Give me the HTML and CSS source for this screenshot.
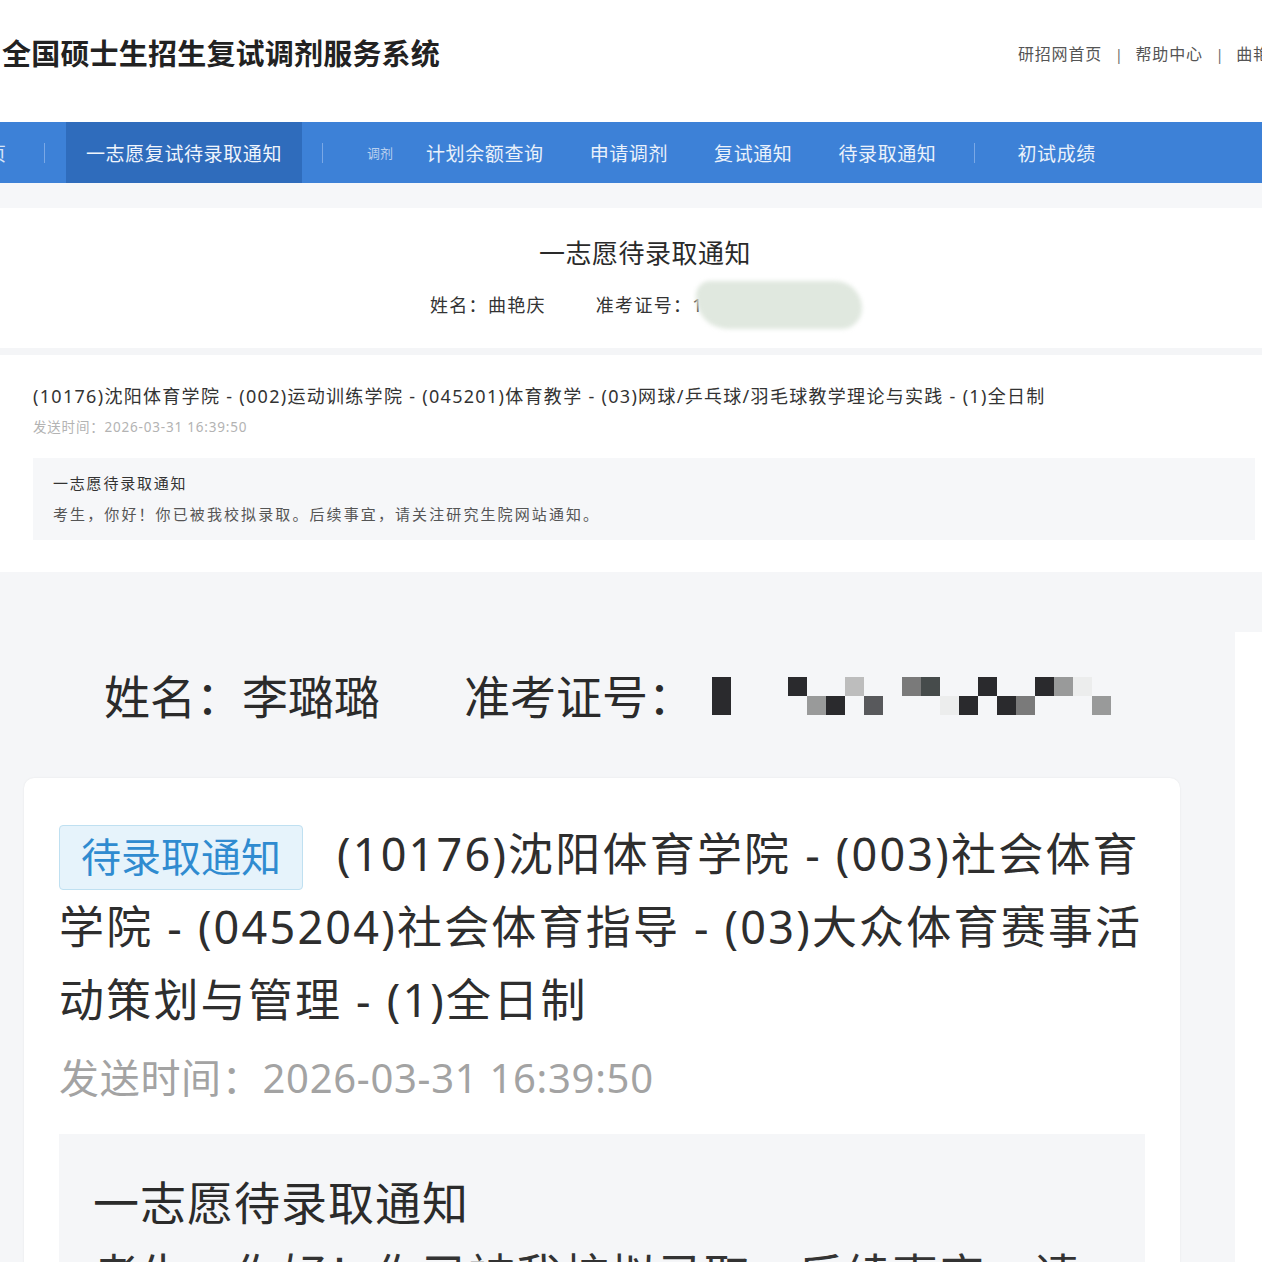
FILE: index.html
```html
<!DOCTYPE html>
<html lang="zh-CN">
<head>
<meta charset="utf-8">
<title>全国硕士生招生复试调剂服务系统</title>
<link rel="stylesheet" href="styles.css">
</head>
<body>
<div class="desk">
  <header class="header">
    <h1 class="site-title">全国硕士生招生复试调剂服务系统</h1>
    <div class="top-links">
      <span>研招网首页</span><span class="bar">|</span><span>帮助中心</span><span class="bar">|</span><span>曲艳庆</span>
    </div>
  </header>
  <nav class="nav">
    <span class="nav-cut">页</span>
    <i class="nav-sep sep-a"></i>
    <span class="nav-active">一志愿复试待录取通知</span>
    <i class="nav-sep sep-b"></i>
    <span class="nav-sub">调剂</span>
    <span class="nav-link first">计划余额查询</span>
    <span class="nav-link">申请调剂</span>
    <span class="nav-link">复试通知</span>
    <span class="nav-link">待录取通知</span>
    <i class="nav-sep sep-c"></i>
    <span class="nav-link last">初试成绩</span>
  </nav>
  <section class="panel-head">
    <h2 class="panel-title">一志愿待录取通知</h2>
    <div class="panel-meta">
      <span class="meta-name">姓名：曲艳庆</span>
      <span class="meta-id">准考证号：1<span class="smudge"></span></span>
    </div>
  </section>
  <section class="panel-body">
    <div class="course">(10176)沈阳体育学院 - (002)运动训练学院 - (045201)体育教学 - (03)网球/乒乓球/羽毛球教学理论与实践 - (1)全日制</div>
    <div class="sent">发送时间：2026-03-31 16:39:50</div>
    <div class="msg">
      <div class="msg-title">一志愿待录取通知</div>
      <div class="msg-text">考生，你好！你已被我校拟录取。后续事宜，请关注研究生院网站通知。</div>
    </div>
  </section>
</div>

<div class="mobile">
  <div class="m-main">
    <div class="m-namebar">
      <span class="m-name">姓名：李璐璐</span>
      <span class="m-idlabel">准考证号：</span>
      <span class="pix">
        <span class="px-tall"></span>
        <span class="px-grid">
          <span class="col"><i class="k"></i><i></i></span>
          <span class="col"><i></i><i class="g2"></i></span>
          <span class="col"><i></i><i class="k"></i></span>
          <span class="col"><i class="g1"></i><i></i></span>
          <span class="col"><i></i><i class="g4"></i></span>
          <span class="col"><i></i><i></i></span>
          <span class="col"><i class="g3"></i><i></i></span>
          <span class="col"><i class="g5"></i><i></i></span>
          <span class="col"><i></i><i class="g0"></i></span>
          <span class="col"><i></i><i class="k"></i></span>
          <span class="col"><i class="k"></i><i></i></span>
          <span class="col"><i></i><i class="k"></i></span>
          <span class="col"><i></i><i class="g3"></i></span>
          <span class="col"><i class="k"></i><i></i></span>
          <span class="col"><i class="g2"></i><i></i></span>
          <span class="col"><i class="g0"></i><i></i></span>
          <span class="col"><i></i><i class="g2"></i></span>
        </span>
      </span>
    </div>
    <article class="m-card">
      <div class="m-course"><span class="m-tag">待录取通知</span>(10176)沈阳体育学院 - (003)社会体育<br>学院 - (045204)社会体育指导 - (03)大众体育赛事活<br>动策划与管理 - (1)全日制</div>
      <div class="m-sent">发送时间：2026-03-31 16:39:50</div>
      <div class="m-msg">
        <div class="m-msg-title">一志愿待录取通知</div>
        <div class="m-msg-text">考生，你好！你已被我校拟录取。后续事宜，请关注研究生院网站通知。</div>
      </div>
    </article>
  </div>
  <div class="m-side"></div>
</div>
</body>
</html>
```

FILE: styles.css
```css
* { box-sizing: border-box; }
html, body {
  margin: 0;
  padding: 0;
}
body {
  width: 1262px;
  overflow: hidden;
  background: #f5f6f8;
  font-family: "Noto Sans", "Noto Sans CJK SC", sans-serif;
  color: #333;
}

/* ---------- desktop screenshot part ---------- */
.desk { background: #fff; }

.header {
  height: 122px;
  padding-bottom: 14px;
  display: flex;
  align-items: center;
  justify-content: space-between;
  overflow: hidden;
  background: #fff;
}
.site-title {
  margin: 0 0 0 2px;
  font-size: 29px;
  line-height: 40px;
  font-weight: 700;
  color: #222;
  letter-spacing: 0.2px;
}
.top-links {
  width: 244px;
  flex-shrink: 0;
  white-space: nowrap;
  overflow: hidden;
  font-size: 16px;
  line-height: 22px;
  color: #555;
  letter-spacing: 0.8px;
}
.top-links .bar {
  display: inline-block;
  margin: 0 12px 0 13px;
  color: #666;
  font-size: 14px;
}

.nav {
  height: 61px;
  background: #3d81d7;
  display: flex;
  align-items: stretch;
  overflow: hidden;
  color: #eaf1fb;
  font-size: 19px;
  letter-spacing: 0.6px;
  white-space: nowrap;
}
.nav > span { display: flex; align-items: center; }
.nav-cut { margin-left: -13px; width: 19px; color: #d6e4f7; }
.nav-sep {
  align-self: center;
  width: 1px;
  height: 20px;
  background: #7aa8e6;
}
.sep-a { margin-left: 38px; }
.sep-b { margin-left: 20px; }
.sep-c { margin-left: 38px; }
.nav-active {
  margin-left: 21px;
  width: 236px;
  padding: 0 20px;
  background: #2f6cbc;
  color: #f0f5fc;
}
.nav-sub {
  margin-left: 44px;
  font-size: 13px;
  letter-spacing: 0;
  color: #b9d0ef;
}
.nav-link { margin-left: 46px; }
.nav-link.first { margin-left: 33px; }
.nav-link.last { margin-left: 42px; }

.panel-head {
  border-top: 25px solid #f6f7f9;
  border-bottom: 7px solid #f4f5f7;
  padding: 27px 0 31px 0;
  background: #fff;
}
.panel-title {
  margin: 0;
  padding-left: 28px;
  text-align: center;
  font-size: 26px;
  line-height: 36px;
  font-weight: 400;
  color: #2a2a2a;
  letter-spacing: 0.5px;
}
.panel-meta {
  margin-top: 22px;
  display: flex;
  gap: 50px;
  padding-left: 430px;
  font-size: 18px;
  line-height: 24px;
  color: #333;
  letter-spacing: 1.3px;
}
.meta-id { position: relative; }
.smudge {
  position: absolute;
  left: 100px;
  top: -12px;
  width: 166px;
  height: 48px;
  border-radius: 18px 34px 26px 40px;
  background: #e0e8df;
  filter: blur(2px);
}

.panel-body {
  padding: 28px 7px 32px 33px;
  background: #fff;
}
.course {
  font-size: 18px;
  line-height: 26px;
  color: #333;
  white-space: nowrap;
  letter-spacing: 1.3px;
}
.sent {
  margin-top: 8px;
  font-size: 13.5px;
  line-height: 20px;
  color: #b3b3b3;
  letter-spacing: 0.8px;
}
.msg {
  margin-top: 21px;
  background: #f6f7f9;
  padding: 14px 20px 15px;
}
.msg-title {
  font-size: 15px;
  line-height: 22px;
  color: #333;
  letter-spacing: 1.8px;
}
.msg-text {
  margin-top: 9px;
  font-size: 15px;
  line-height: 22px;
  color: #555;
  letter-spacing: 2.1px;
}

/* ---------- mobile screenshot part ---------- */
.mobile {
  display: flex;
  background: #f5f6f8;
}
.m-main {
  width: 1235px;
  flex-shrink: 0;
  padding-top: 92px;
}
.m-side {
  flex: 1;
  margin-top: 60px;
  background: #fff;
}
.m-namebar {
  display: flex;
  align-items: center;
  padding-left: 104px;
  height: 60px;
  font-size: 46px;
  color: #2b2b2b;
  white-space: nowrap;
}
.m-idlabel { margin-left: 84px; }
.pix {
  display: flex;
  align-items: flex-start;
  margin-left: 18px;
  margin-top: 4px;
}
.px-tall {
  width: 19px;
  height: 38px;
  background: #2a2a2d;
}
.px-grid {
  display: flex;
  margin-left: 57px;
}
.px-grid .col {
  display: flex;
  flex-direction: column;
  width: 19px;
}
.px-grid i {
  display: block;
  width: 19px;
  height: 19px;
}
.px-grid .k { background: #2a2a2d; }
.px-grid .g0 { background: #eceded; }
.px-grid .g1 { background: #bdbdbd; }
.px-grid .g2 { background: #999a9a; }
.px-grid .g3 { background: #7a7a7a; }
.px-grid .g4 { background: #58595c; }
.px-grid .g5 { background: #464b4b; }

.m-card {
  margin: 54px 0 0 24px;
  width: 1156px;
  background: #fff;
  border-radius: 10px 10px 0 0;
  box-shadow: 0 0 2px rgba(0, 0, 0, 0.08);
  padding: 39px 35px 40px 35px;
}
.m-course {
  font-size: 45px;
  line-height: 73px;
  color: #2e2e2e;
  white-space: nowrap;
  letter-spacing: 2.2px;
}
.m-tag {
  display: inline-block;
  vertical-align: top;
  margin: 8px 34px 0 0;
  height: 65px;
  padding: 0 21px;
  line-height: 61px;
  font-size: 40px;
  letter-spacing: 0;
  color: #2f8bd0;
  background: #e6f3fb;
  border: 1px solid #bfe0f1;
  border-radius: 4px;
}
.m-sent {
  margin-top: 14px;
  font-size: 40px;
  line-height: 56px;
  color: #a3a3a3;
  letter-spacing: 0.7px;
}
.m-msg {
  margin-top: 28px;
  background: #f5f6f8;
  padding: 38px 34px 40px;
}
.m-msg-title {
  font-size: 46px;
  line-height: 60px;
  color: #2b2b2b;
  letter-spacing: 1px;
}
.m-msg-text {
  margin-top: 12px;
  font-size: 46px;
  line-height: 60px;
  color: #333;
  letter-spacing: 1px;
}
```
